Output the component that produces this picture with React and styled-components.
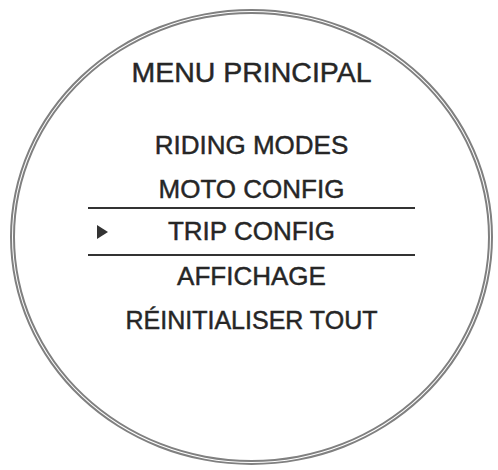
import React from 'react';
import styled, { createGlobalStyle } from 'styled-components';

const Global = createGlobalStyle`
  html, body { margin: 0; padding: 0; background: #fff; }
  body { font-family: "Liberation Sans", Arial, sans-serif; }
`;

const Page = styled.div`
  width: 498px;
  height: 470px;
  padding: 9px 0 0 10px;
  box-sizing: border-box;
`;

const Dial = styled.div`
  width: 483px;
  height: 456px;
  box-sizing: border-box;
  border: 5px double #808080;
  border-radius: 50%;
  display: flex;
  flex-direction: column;
  align-items: center;
  padding-top: 36px;
  color: #262626;
  -webkit-text-stroke: 0.45px #262626;
`;

const Title = styled.div`
  font-size: 28.5px;
  line-height: 44px;
  height: 44px;
  margin-bottom: 29px;
`;

const List = styled.div`
  display: flex;
  flex-direction: column;
  align-items: center;
  width: 327px;
`;

const Item = styled.div`
  font-size: ${p => (p.$small ? '25px' : '26px')};
  line-height: 44px;
  height: 44px;
  text-align: center;
  width: 100%;
`;

const Selected = styled.div`
  width: 100%;
  height: 49px;
  box-sizing: border-box;
  margin: -4px 0 -2px;
  border-top: 2px solid #333;
  border-bottom: 2px solid #333;
  display: grid;
  grid-template-columns: 1fr auto 1fr;
  align-items: center;
  font-size: 26px;
`;

const Marker = styled.span`
  justify-self: start;
  margin-left: 9px;
  width: 0;
  height: 0;
  border-top: 7px solid transparent;
  border-bottom: 7px solid transparent;
  border-left: 11px solid #333;
`;

const items = ['RIDING MODES', 'MOTO CONFIG', 'TRIP CONFIG', 'AFFICHAGE', 'RÉINITIALISER TOUT'];
const current = 'TRIP CONFIG';

export default function App() {
  return (
    <Page>
      <Global />
      <Dial>
        <Title>MENU PRINCIPAL</Title>
        <List>
          {items.map(label =>
            label === current ? (
              <Selected key={label}>
                <Marker />
                <span>{label}</span>
                <span />
              </Selected>
            ) : (
              <Item key={label} $small={label.length > 14}>{label}</Item>
            )
          )}
        </List>
      </Dial>
    </Page>
  );
}
